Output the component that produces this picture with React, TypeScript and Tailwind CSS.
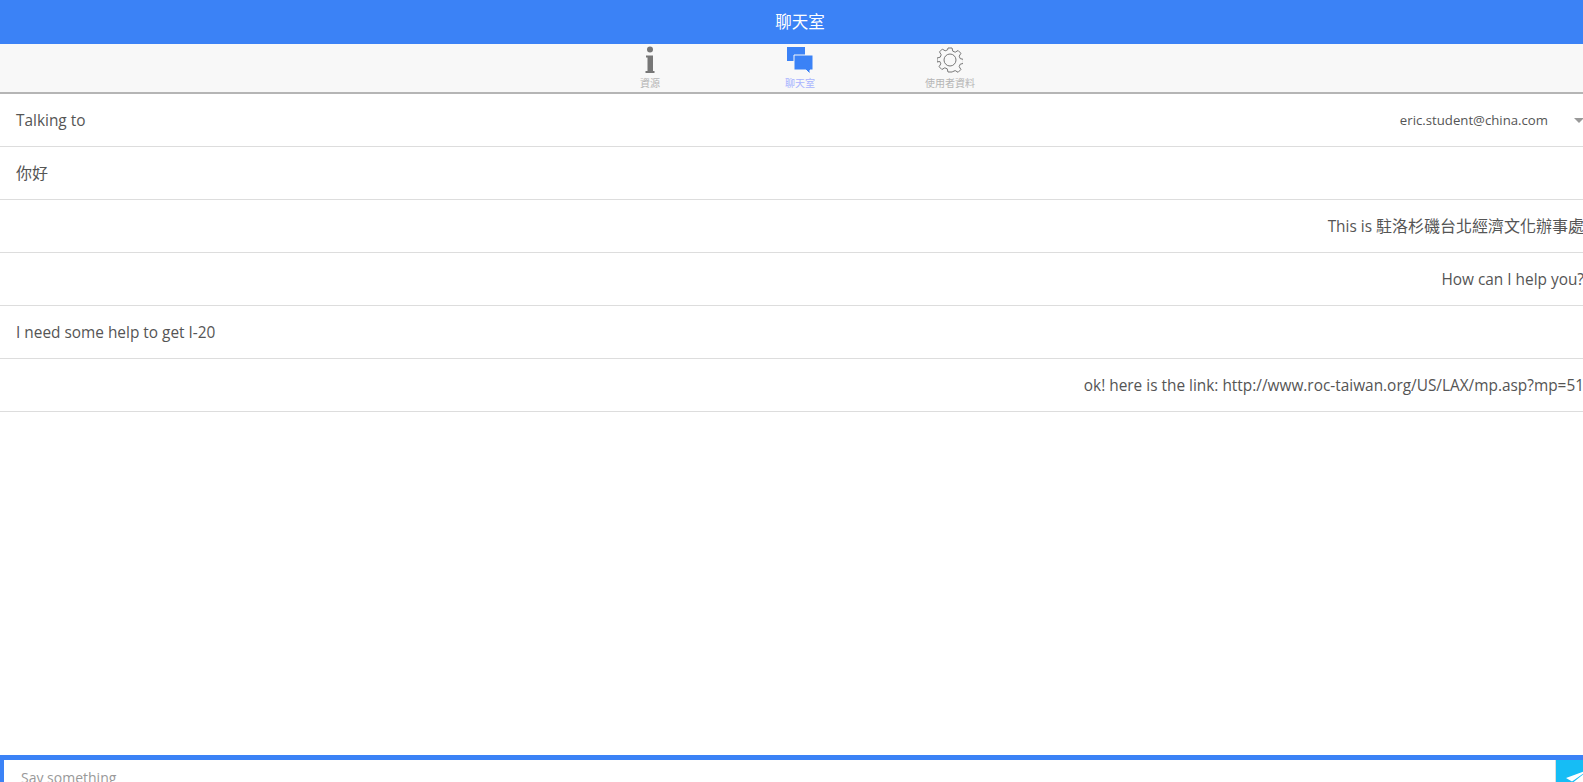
import React from 'react'

const FONT = "font-['Open_Sans','Noto_Sans_CJK_TC',sans-serif]"

interface Message {
  text: React.ReactNode
  mine: boolean
  latin?: boolean
}

// cjk glyphs sit at 16px, latin runs a touch smaller next to them
const Cjk = ({ children }: { children: React.ReactNode }) => <span className="text-[16px]">{children}</span>

const MESSAGES: Message[] = [
  { text: <Cjk>你好</Cjk>, mine: false },
  { text: <>This is <Cjk>駐洛杉磯台北經濟文化辦事處</Cjk></>, mine: true },
  { text: 'How can I help you?', mine: true, latin: true },
  { text: 'I need some help to get I-20', mine: false, latin: true },
  { text: 'ok! here is the link: http://www.roc-taiwan.org/US/LAX/mp.asp?mp=51', mine: true, latin: true },
]

const InfoIcon = () => (
  <svg width="12" height="28" viewBox="0 0 12 28" fill="#777">
    <circle cx="6" cy="3.5" r="3" />
    <path d="M2 9.5h7v15.5h1.5V27h-9v-2h2V11.5h-1.5z" />
  </svg>
)

const ChatIcon = () => (
  <svg width="28" height="28" viewBox="0 0 28 28" fill="#3b82f6">
    <path d="M1 1h18v14H1z" />
    <path d="M8 9h19v15h-3v4l-4-4H8z" stroke="#f8f8f8" strokeWidth="1" />
  </svg>
)

const GearIcon = () => (
  <svg width="26" height="26" viewBox="0 0 26 26" fill="none" stroke="#777" strokeWidth="1">
    <circle cx="13" cy="13" r="6" />
    <path d="M11 1h4l.8 3.2 2.4 1 2.9-1.7 2.8 2.8-1.7 2.9 1 2.4 3.2.8v4l-3.2.8-1 2.4 1.7 2.9-2.8 2.8-2.9-1.7-2.4 1L15 25h-4l-.8-3.2-2.4-1-2.9 1.7-2.8-2.8 1.7-2.9-1-2.4L0 15v-4l3.2-.8 1-2.4-1.7-2.9 2.8-2.8 2.9 1.7 2.4-1z" />
  </svg>
)

const SendIcon = () => (
  <svg width="24" height="24" viewBox="0 0 24 24" fill="#fff">
    <path d="M24 0L0 9l6 3.5zM24 0L7 13.5v8.5l4-5 7 3z" />
  </svg>
)

const Tab = ({ icon, label, active }: { icon: React.ReactNode; label: string; active?: boolean }) => (
  <div className="w-[150px] flex flex-col items-center">
    <div className="h-[29px] flex items-center justify-center">{icon}</div>
    <span className={`text-[10px] leading-[14px] mt-[2px] ${active ? 'text-[#a9b4ff]' : 'text-[#b5b5b5]'}`}>
      {label}
    </span>
  </div>
)

export default function App() {
  return (
    <div className="h-[782px] w-full overflow-hidden">
      {/* the page runs wider than the window, so the right edge gets clipped */}
      <div className={`h-full w-[1600px] flex flex-col bg-white text-[#555] ${FONT}`}>
        <header className="h-[44px] shrink-0 bg-[#3b82f6] text-white text-[16.5px] flex items-center justify-center">
          聊天室
        </header>

        <nav className="h-[50px] shrink-0 bg-[#f8f8f8] border-b-2 border-[#b5b5b5] flex justify-center pt-[1px]">
          <Tab icon={<InfoIcon />} label="資源" />
          <Tab icon={<ChatIcon />} label="聊天室" active />
          <Tab icon={<GearIcon />} label="使用者資料" />
        </nav>

        <div className="h-[53px] shrink-0 border-b border-[#ddd] px-4 pt-[2px] flex items-center justify-between text-[15.4px]">
          <span>Talking to</span>
          <div className="flex items-center text-[13.2px]">
            <span>eric.student@china.com</span>
            <span className="ml-[26px] w-0 h-0 border-x-[5px] border-x-transparent border-t-[5px] border-t-[#999] mb-[1px]" />
          </div>
        </div>

        {MESSAGES.map((m, i) => (
          <div
            key={i}
            className={`h-[53px] shrink-0 border-b border-[#ddd] px-4 flex items-center text-[15.4px] whitespace-pre ${
              m.mine ? 'justify-end' : ''
            } ${m.latin ? 'pt-[2px]' : ''}`}
          >
            <span>{m.text}</span>
          </div>
        ))}

        <div className="flex-1" />

        <div className="h-[27px] shrink-0 bg-[#3b82f6] pt-[5px] pl-1 flex">
          <div className="flex-1 bg-white pl-[17px] pt-[8px] text-[14px] leading-[20px] text-[#999] border-r border-[#ddd]">
            Say something
          </div>
          <div className="w-[44px] bg-[#16bdf5] pl-[10px] pt-[9px] overflow-hidden">
            <SendIcon />
          </div>
        </div>
      </div>
    </div>
  )
}
